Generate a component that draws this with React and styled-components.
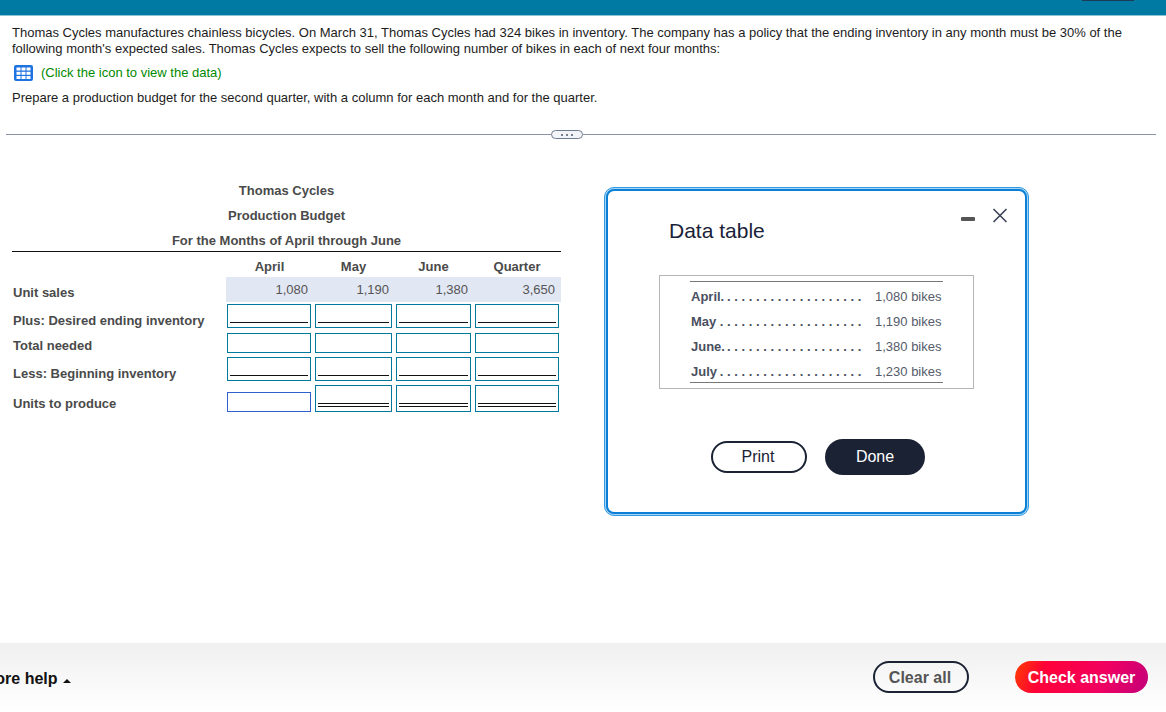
import React from "react";
import styled, { createGlobalStyle } from "styled-components";

const Global = createGlobalStyle`
  html, body { margin: 0; padding: 0; background: #fff; overflow: hidden; }
  body { font-family: "Liberation Sans", Arial, sans-serif; }
`;

const Page = styled.div`
  position: relative;
  width: 1166px;
  height: 712px;
  overflow: hidden;
  display: flex;
  flex-direction: column;
  background: #fff;
`;

const TopBar = styled.header`
  position: relative;
  flex: none;
  height: 16px;
  background: #007aa2;
  border-bottom: 1px solid #8cc4d6;
  box-sizing: border-box;
`;

const TopTab = styled.span`
  position: absolute;
  top: 0;
  left: 1082px;
  width: 52px;
  height: 1px;
  background: #1d3a55;
`;

const Main = styled.main`
  flex: 1;
  min-height: 0;
  padding: 9px 0 0;
`;

const Question = styled.section`
  padding: 0 12px;
  color: #1c1c1c;
  font-size: 13px;
  line-height: 16px;
`;

const Para = styled.p`
  margin: 0;
`;

const DataLink = styled.div`
  display: flex;
  align-items: center;
  gap: 8px;
  margin: 8px 0 9px 2px;
  height: 16px;
  color: #008a00;
`;

const Divider = styled.div`
  display: flex;
  align-items: center;
  margin: 24px 10px 0 6px;
  height: 9px;
  &::before, &::after {
    content: "";
    height: 1px;
    background: #8a94a6;
  }
  &::before { width: 545px; }
  &::after { flex: 1; }
`;

const Pill = styled.span`
  flex: none;
  box-sizing: border-box;
  width: 32px;
  height: 9px;
  border: 1px solid #6f7d92;
  border-radius: 5px;
  background: #f2f4f7;
  display: flex;
  align-items: center;
  justify-content: center;
  gap: 3px;
  & > i {
    width: 2px;
    height: 2px;
    background: #4f5a6c;
    border-radius: 50%;
  }
`;

const Budget = styled.section`
  width: 549px;
  margin: 39px 0 0 12px;
  color: #4a4a4a;
  font-size: 13px;
  font-weight: bold;
`;

const TitleLine = styled.div`
  height: 25px;
  line-height: 25px;
  text-align: center;
`;

const TitleBlock = styled.div`
  border-bottom: 1px solid #111;
  height: 74px;
  box-sizing: border-box;
`;

const Row = styled.div`
  display: grid;
  grid-template-columns: 214px 87px 81px 79px 88px;
  height: ${(p) => p.$h}px;
`;

const HeadCell = styled.div`
  text-align: center;
  height: 100%;
  line-height: 30px;
  box-sizing: border-box;
  border-bottom: ${(p) => (p.$empty ? "none" : "1px solid #111")};
`;

const RowLabel = styled.div`
  padding: ${(p) => p.$top}px 0 0 1px;
  line-height: 16px;
`;

const Amount = styled.div`
  background: #e1e7f3;
  color: #555;
  font-weight: normal;
  text-align: right;
  line-height: 25px;
  padding-right: ${(p) => p.$pr}px;
`;

const InputCell = styled.div`
  box-sizing: border-box;
  position: relative;
  margin: ${(p) => p.$top}px 2px 0 ${(p) => (p.$first ? 1 : 2)}px;
  height: ${(p) => p.$h}px;
  border: 1px solid ${(p) => (p.$focus ? "#3060d0" : "#007a9c")};
  background: #fff;
  &::after {
    content: "";
    display: ${(p) => (p.$rule === "none" ? "none" : "block")};
    position: absolute;
    left: 2px;
    right: 2px;
    bottom: 4px;
    box-sizing: content-box;
    border-top: 1px solid #111;
    border-bottom: ${(p) => (p.$rule === "double" ? "1px solid #111" : "none")};
    height: ${(p) => (p.$rule === "double" ? "2px" : "0")};
  }
`;

const Dialog = styled.aside`
  position: absolute;
  left: 604px;
  top: 187px;
  width: 425px;
  height: 329px;
  box-sizing: border-box;
  border: 1px solid #2f9ae2;
  border-radius: 10px;
  padding: 1px;
  background: #a8d5f5;
`;

const DialogInner = styled.div`
  position: relative;
  box-sizing: border-box;
  height: 100%;
  border: 2px solid #0a7fd6;
  border-radius: 8px;
  padding: 27px 0 0 61px;
  background: #fff;
`;

const DialogTitle = styled.h2`
  margin: 0;
  font-size: 21px;
  font-weight: normal;
  line-height: 26px;
  color: #1a2238;
`;

const WinControls = styled.div`
  position: absolute;
  top: 17px;
  right: 17px;
  display: flex;
  align-items: center;
  gap: 17px;
`;

const Minimise = styled.span`
  width: 14px;
  height: 4px;
  margin-top: 5px;
  border-radius: 1px;
  background: #555;
`;

const DataBox = styled.div`
  box-sizing: border-box;
  width: 315px;
  height: 114px;
  margin: 31px 0 0 -10px;
  padding: 5px 30px 0 30px;
  border: 1px solid #b5b5b5;
`;

const DataRows = styled.div`
  height: 102px;
  box-sizing: border-box;
  border-top: 1px solid #777;
  border-bottom: 1px solid #777;
`;

const DataRow = styled.div`
  display: flex;
  height: 25px;
  line-height: 25px;
  padding-left: 1px;
  font-size: 13px;
  &:first-child { margin-top: 2px; }
`;

const Month = styled.span`
  font-weight: bold;
  color: #4a4f60;
`;

const Leader = styled.span`
  flex: 1;
  margin-right: 10px;
  color: #4a4f60;
  font-weight: bold;
  letter-spacing: 3.65px;
  text-align: right;
  white-space: nowrap;
  overflow: hidden;
`;

const Bikes = styled.span`
  flex: none;
  width: 68px;
  color: #555b6a;
`;

const DialogButtons = styled.div`
  display: flex;
  align-items: center;
  gap: 18px;
  margin: 50px 0 0 42px;
`;

const OutlineBtn = styled.button`
  box-sizing: border-box;
  width: ${(p) => p.$w}px;
  height: 32px;
  border: 2px solid #1a2233;
  border-radius: 16px;
  background: transparent;
  color: ${(p) => p.$color};
  font-family: inherit;
  font-size: 16px;
  font-weight: ${(p) => p.$weight};
  padding: 0 2px 0 0;
`;

const DarkBtn = styled.button`
  width: 100px;
  height: 36px;
  border: none;
  border-radius: 18px;
  background: #1a2233;
  color: #fff;
  font-family: inherit;
  font-size: 16px;
  padding: 0;
`;

const Footer = styled.footer`
  flex: none;
  height: 69px;
  box-sizing: border-box;
  background: linear-gradient(#f0f0f0, #ffffff);
  display: flex;
  align-items: center;
  padding: 0 18px 0 0;
`;

const MoreHelp = styled.div`
  display: flex;
  align-items: center;
  gap: 5px;
  margin: 3px 0 0 -18px;
  font-size: 16px;
  font-weight: bold;
  color: #111;
  white-space: nowrap;
`;

const Caret = styled.span`
  width: 0;
  height: 0;
  margin-top: 3px;
  border-left: 4px solid transparent;
  border-right: 4px solid transparent;
  border-bottom: 4px solid #111;
`;

const FooterActions = styled.div`
  display: flex;
  align-items: center;
  gap: 46px;
  margin-left: auto;
  margin-bottom: 1px;
  & > button { padding-top: 2px; }
`;

const CheckBtn = styled.button`
  width: 133px;
  height: 32px;
  border: none;
  border-radius: 16px;
  background: linear-gradient(110deg, #ff3d00 0%, #ff0038 22%, #f00060 65%, #c4007a 100%);
  color: #fff;
  font-family: inherit;
  font-size: 16px;
  font-weight: bold;
  padding: 0;
`;

const rows = [
  { label: "Plus: Desired ending inventory", h: 28, top: 11, inTop: 2, inH: 24, rule: "single" },
  { label: "Total needed", h: 25, top: 8, inTop: 3, inH: 20, rule: "none" },
  { label: "Less: Beginning inventory", h: 28, top: 11, inTop: 2, inH: 24, rule: "single" },
  { label: "Units to produce", h: 30, top: 13, inTop: 2, inH: 27, rule: "double" },
];

const months = [
  ["April.", 19],
  ["May", 20],
  ["June.", 19],
  ["July", 20],
];
const bikes = ["1,080 bikes", "1,190 bikes", "1,380 bikes", "1,230 bikes"];

export default function App() {
  return (
    <Page>
      <Global />
      <TopBar>
        <TopTab />
      </TopBar>
      <Main>
        <Question>
          <Para>
            Thomas Cycles manufactures chainless bicycles. On March 31, Thomas Cycles had 324 bikes in inventory. The company has a policy that the ending inventory in any month must be 30% of the following month's expected sales. Thomas Cycles expects to sell the following number of bikes in each of next four months:
          </Para>
          <DataLink>
            <svg width="19" height="16" viewBox="0 0 19 16" aria-hidden="true">
              <rect width="19" height="16" rx="2" fill="#1f73e0" />
              <g fill="#fff">
                {[2.5, 6.8, 11].map((y) =>
                  [2.5, 7.5, 12.5].map((x) => <rect key={`${x}-${y}`} x={x} y={y} width="4" height="3" />)
                )}
              </g>
            </svg>
            <span>(Click the icon to view the data)</span>
          </DataLink>
          <Para>Prepare a production budget for the second quarter, with a column for each month and for the quarter.</Para>
        </Question>
        <Divider>
          <Pill><i /><i /><i /></Pill>
        </Divider>
        <Budget>
          <TitleBlock>
            <TitleLine>Thomas Cycles</TitleLine>
            <TitleLine>Production Budget</TitleLine>
            <TitleLine>For the Months of April through June</TitleLine>
          </TitleBlock>
          <Row $h={25}>
            <HeadCell $empty />
            <HeadCell>April</HeadCell>
            <HeadCell>May</HeadCell>
            <HeadCell>June</HeadCell>
            <HeadCell>Quarter</HeadCell>
          </Row>
          <Row $h={25}>
            <RowLabel $top={8}>Unit sales</RowLabel>
            <Amount $pr={5}>1,080</Amount>
            <Amount $pr={5}>1,190</Amount>
            <Amount $pr={5}>1,380</Amount>
            <Amount $pr={6}>3,650</Amount>
          </Row>
          {rows.map((r) => (
            <Row key={r.label} $h={r.h}>
              <RowLabel $top={r.top}>{r.label}</RowLabel>
              {[0, 1, 2, 3].map((i) => {
                const focus = r.rule === "double" && i === 0;
                return (
                  <InputCell
                    key={i}
                    $first={i === 0}
                    $focus={focus}
                    $rule={focus ? "none" : r.rule}
                    $top={focus ? 9 : r.inTop}
                    $h={focus ? 20 : r.inH}
                  />
                );
              })}
            </Row>
          ))}
        </Budget>
      </Main>
      <Footer>
        <MoreHelp>
          More help <Caret />
        </MoreHelp>
        <FooterActions>
          <OutlineBtn $w={96} $color="#555" $weight="bold">Clear all</OutlineBtn>
          <CheckBtn>Check answer</CheckBtn>
        </FooterActions>
      </Footer>
      <Dialog>
        <DialogInner>
          <DialogTitle>Data table</DialogTitle>
          <WinControls>
            <Minimise />
            <svg width="16" height="16" viewBox="0 0 16 16" aria-hidden="true">
              <path d="M1.5 1 L14.5 14 M14.5 1 L1.5 14" stroke="#3b4354" strokeWidth="1.6" fill="none" />
            </svg>
          </WinControls>
          <DataBox>
            <DataRows>
              {months.map(([m, n], i) => (
                <DataRow key={m}>
                  <Month>{m}</Month>
                  <Leader>{".".repeat(n)}</Leader>
                  <Bikes>{bikes[i]}</Bikes>
                </DataRow>
              ))}
            </DataRows>
          </DataBox>
          <DialogButtons>
            <OutlineBtn $w={96} $color="#1a2233" $weight="normal">Print</OutlineBtn>
            <DarkBtn>Done</DarkBtn>
          </DialogButtons>
        </DialogInner>
      </Dialog>
    </Page>
  );
}
